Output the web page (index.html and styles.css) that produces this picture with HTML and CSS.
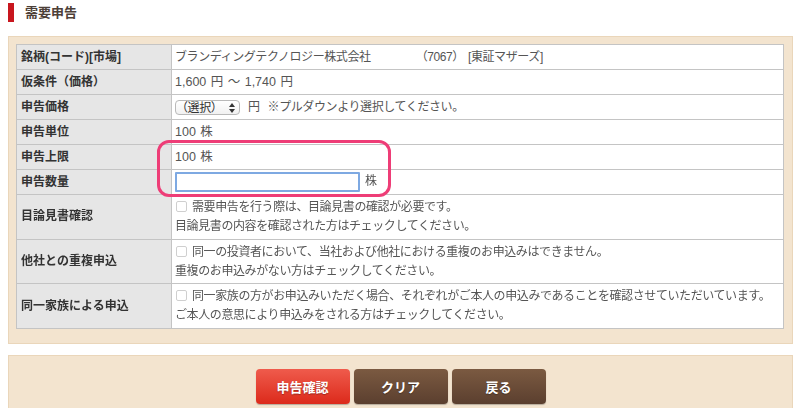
FILE: index.html
```html
<!doctype html>
<html lang="ja">
<head>
  <meta charset="UTF-8">
  <title>需要申告</title>
  <link rel="stylesheet" href="styles.css">
</head>
<body>
  <h2 class="heading">需要申告</h2>
  <div class="panel">
    <div class="table-wrap">
      <table class="form-table">
        <tr>
          <th>銘柄(コード)[市場]</th>
          <td><span class="company">ブランディングテクノロジー株式会社</span><span class="code">（7067）</span>[東証マザーズ]</td>
        </tr>
        <tr>
          <th>仮条件（価格）</th>
          <td class="num">1,600 円 ～ 1,740 円</td>
        </tr>
        <tr>
          <th>申告価格</th>
          <td>
            <span class="select">（選択）<svg class="select-arrows" width="6" height="10" viewBox="0 0 6 10"><path d="M3 0 L6 4 H0 Z M0 6 H6 L3 10 Z" fill="#333"/></svg></span>
            <span class="unit">円</span><span class="note">※プルダウンより選択してください。</span>
          </td>
        </tr>
        <tr>
          <th>申告単位</th>
          <td class="num">100 株</td>
        </tr>
        <tr>
          <th>申告上限</th>
          <td class="num">100 株</td>
        </tr>
        <tr>
          <th>申告数量</th>
          <td><input type="text" class="qty" autofocus><span class="unit">株</span></td>
        </tr>
        <tr class="multi">
          <th>目論見書確認</th>
          <td>
            <label><input type="checkbox" class="check">需要申告を行う際は、目論見書の確認が必要です。</label><br>
            目論見書の内容を確認された方はチェックしてください。
          </td>
        </tr>
        <tr class="multi">
          <th>他社との重複申込</th>
          <td>
            <label><input type="checkbox" class="check">同一の投資者において、当社および他社における重複のお申込みはできません。</label><br>
            重複のお申込みがない方はチェックしてください。
          </td>
        </tr>
        <tr class="multi">
          <th>同一家族による申込</th>
          <td>
            <label><input type="checkbox" class="check">同一家族の方がお申込みいただく場合、それぞれがご本人の申込みであることを確認させていただいています。</label><br>
            ご本人の意思により申込みをされる方はチェックしてください。
          </td>
        </tr>
      </table>
      <div class="highlight"></div>
    </div>
  </div>
  <div class="panel actions">
    <button type="button" class="btn btn-primary">申告確認</button>
    <button type="button" class="btn">クリア</button>
    <button type="button" class="btn">戻る</button>
  </div>
</body>
</html>
```

FILE: styles.css
```css
body {
  margin: 0;
  padding: 3px 7px 0 8px;
  background: #fff;
  color: #555;
  font-family: "Liberation Sans", "Noto Sans CJK JP", sans-serif;
  font-size: 12px;
}
.heading {
  margin: 0 0 14px;
  height: 19px;
  line-height: 19px;
  border-left: 6px solid #c8161e;
  padding-left: 11px;
  font-size: 13px;
  font-weight: bold;
  color: #4d4038;
}
.panel {
  background: #f3e4cf;
  border: 1px solid #ead6ba;
  padding: 7px 8px 14px 7px;
}
.table-wrap {
  position: relative;
}
.form-table {
  width: 100%;
  border-collapse: collapse;
  border: 1px solid #b5b5b5;
}
.form-table th,
.form-table td {
  border: 1px solid #c4c4c4;
  height: 24px;
  padding: 0 3px;
  line-height: 16px;
  text-align: left;
  vertical-align: middle;
}
.form-table th {
  width: 147px;
  background: #e6e6e6;
  color: #333;
  font-weight: bold;
  padding-left: 4px;
}
.form-table td {
  background: #fff;
  padding-left: 3px;
  letter-spacing: -0.4px;
}
.form-table td.num {
  letter-spacing: 0;
  word-spacing: 1px;
  font-size: 12.5px;
}
.form-table tr.multi th,
.form-table tr.multi td {
  height: 43.7px;
  line-height: 19px;
}
.company {
  margin-right: 45px;
}
.code {
  margin-right: 4px;
}
.select {
  display: inline-flex;
  align-items: center;
  justify-content: space-between;
  box-sizing: border-box;
  width: 65px;
  height: 15px;
  padding: 0 4px 0 0;
  border: 1px solid #b9b9b9;
  border-radius: 4px;
  background: linear-gradient(#ffffff, #f1f1f1);
  color: #333;
  font-size: 12px;
  vertical-align: middle;
}
.select-arrows {
  display: block;
}
.unit {
  margin-left: 5px;
  margin-right: 8px;
}
.qty {
  box-sizing: border-box;
  width: 185px;
  height: 20px;
  margin: 0;
  border: 2px solid #7ea9e2;
  border-radius: 1px;
  padding: 0 2px;
  font-size: 12px;
  vertical-align: middle;
  outline: none;
}
.check {
  appearance: none;
  box-sizing: border-box;
  width: 11px;
  height: 11px;
  margin: 0 5px 0 1px;
  border: 1px solid #cfcfcf;
  border-radius: 2px;
  background: #fff;
  vertical-align: -1px;
}
.highlight {
  position: absolute;
  left: 141px;
  top: 96px;
  width: 234px;
  height: 57px;
  box-sizing: border-box;
  border: 3px solid #ee3d77;
  border-radius: 12px;
  pointer-events: none;
}
.actions {
  margin-top: 11px;
  padding: 13px 0 20px;
  display: flex;
  justify-content: center;
  gap: 4px;
}
.btn {
  width: 94px;
  height: 35px;
  border: none;
  border-radius: 4px;
  background: linear-gradient(#7b5a41, #5b3f2f);
  box-shadow: 0 1px 1px rgba(0, 0, 0, 0.25);
  color: #fff;
  font-family: "Noto Sans CJK JP", sans-serif;
  font-size: 13px;
  font-weight: bold;
  text-shadow: 0 1px 1px rgba(0, 0, 0, 0.3);
  cursor: pointer;
}
.btn-primary {
  background: linear-gradient(#ef5b4c, #dc2a1b);
}
```
